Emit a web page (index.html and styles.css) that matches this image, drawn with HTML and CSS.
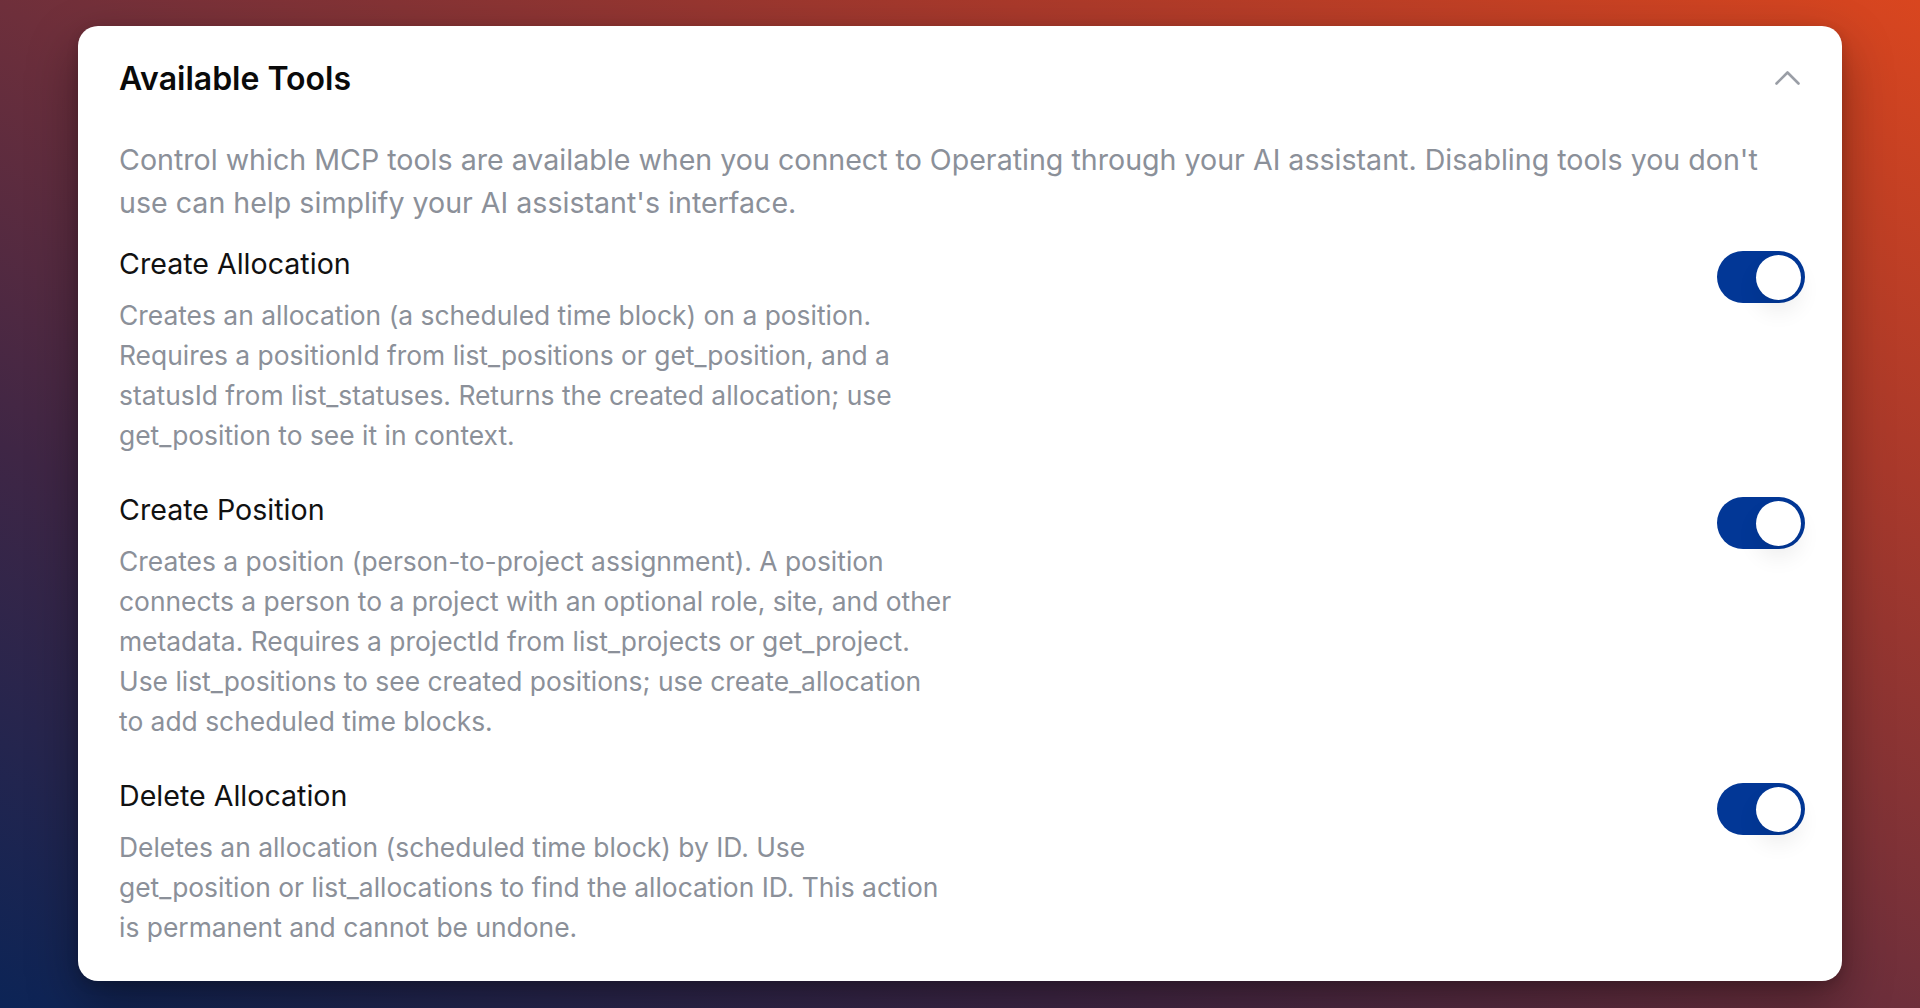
FILE: index.html
```html
<!DOCTYPE html>
<html lang="en">
<head>
  <meta charset="UTF-8" />
  <meta name="viewport" content="width=device-width, initial-scale=1.0"/>
  <title>Available Tools</title>
  <link rel="stylesheet" href="styles.css">
</head>
<body>
  <section class="card">
    <header class="card-header">
      <h2>Available Tools</h2>
      <button class="collapse-btn" type="button" aria-label="Collapse">
        <svg width="25" height="15" viewBox="0 0 25 15" fill="none">
          <path d="M1.5 13.5 L12.5 2.5 L23.5 13.5" stroke="#9a9ea6" stroke-width="2.6" stroke-linecap="round" stroke-linejoin="round"/>
        </svg>
      </button>
    </header>

    <p class="intro">Control which MCP tools are available when you connect to Operating through your AI assistant. Disabling tools you don't use can help simplify your AI assistant's interface.</p>

    <div class="tool-list">
      <div class="tool">
        <div class="tool-info">
          <h3>Create Allocation</h3>
          <p>Creates an allocation (a scheduled time block) on a position. Requires a positionId from list_positions or get_position, and a statusId from list_statuses. Returns the created allocation; use get_position to see it in context.</p>
        </div>
        <label class="switch">
          <input type="checkbox" checked />
          <span class="slider"></span>
        </label>
      </div>

      <div class="tool">
        <div class="tool-info">
          <h3>Create Position</h3>
          <p>Creates a position (person-to-project assignment). A position connects a person to a project with an optional role, site, and other metadata. Requires a projectId from list_projects or get_project. Use list_positions to see created positions; use create_allocation to&nbsp;add scheduled time blocks.</p>
        </div>
        <label class="switch">
          <input type="checkbox" checked />
          <span class="slider"></span>
        </label>
      </div>

      <div class="tool">
        <div class="tool-info">
          <h3>Delete Allocation</h3>
          <p>Deletes an allocation (scheduled time block) by ID. Use get_position or list_allocations to find the allocation ID. This action is permanent and cannot be undone.</p>
        </div>
        <label class="switch">
          <input type="checkbox" checked />
          <span class="slider"></span>
        </label>
      </div>
    </div>
  </section>
</body>
</html>
```

FILE: styles.css
```css
html, body {
  height: 100%;
}

body {
  margin: 0;
  font-family: 'Inter', 'Noto Sans', sans-serif;
  background: linear-gradient(to top right, #0c2456 0%, #3f2645 28%, #73303a 52%, #a9392b 76%, #d9461f 100%);
  overflow: hidden;
  padding: 26px 78px 0 78px;
  box-sizing: border-box;
}

.card {
  background: #fff;
  border-radius: 20px;
  height: 955px;
  box-sizing: border-box;
  padding: 0 37px 0 41px;
  box-shadow: 0 20px 50px rgba(0, 0, 0, 0.35), 0 4px 12px rgba(0, 0, 0, 0.15);
}

.card-header {
  display: flex;
  justify-content: space-between;
  align-items: center;
  padding: 33px 5px 0 0;
}

.card-header h2 {
  margin: 0;
  font-size: 32px;
  line-height: 40px;
  font-weight: 600;
  color: #0a0a0a;
}

.collapse-btn {
  background: none;
  border: none;
  padding: 0;
  width: 25px;
  height: 15px;
  display: flex;
  cursor: pointer;
  margin-top: -4px;
}

.intro {
  margin: 39px 0 0 0;
  max-width: 1670px;
  font-size: 28.6px;
  line-height: 43px;
  color: #8b9099;
}

.tool-list {
  margin-top: 22px;
  display: flex;
  flex-direction: column;
  gap: 37px;
}

.tool {
  display: flex;
  justify-content: space-between;
  align-items: flex-start;
}

.tool-info h3 {
  margin: 0;
  font-size: 28.6px;
  line-height: 36px;
  font-weight: 400;
  color: #111;
}

.tool-info p {
  margin: 13px 0 0 0;
  max-width: 836px;
  font-size: 26.4px;
  line-height: 40px;
  color: #8b9099;
}

.switch {
  position: relative;
  display: block;
  width: 88px;
  height: 52px;
  margin-top: 5px;
  flex-shrink: 0;
  cursor: pointer;
}

.switch input {
  display: none;
}

.slider {
  position: absolute;
  inset: 0;
  background: #d1d5db;
  border-radius: 26px;
}

.slider::after {
  content: '';
  position: absolute;
  top: 3.5px;
  left: 3.5px;
  width: 45px;
  height: 45px;
  border-radius: 50%;
  background: #fff;
  box-shadow: 0 12px 22px rgba(0, 0, 0, 0.07);
}

.switch input:checked + .slider {
  background: #023796;
}

.switch input:checked + .slider::after {
  left: auto;
  right: 4px;
}
```
